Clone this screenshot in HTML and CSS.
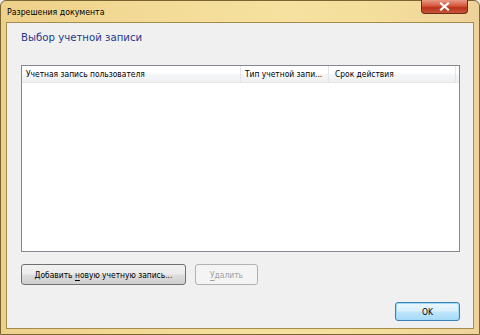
FILE: index.html
```html
<!DOCTYPE html>
<html lang="ru">
<head>
  <meta charset="UTF-8">
  <title>Разрешения документа</title>
  <link rel="stylesheet" href="styles.css">
</head>
<body>
  <div class="window">
    <div class="titlebar">
      <span class="title">Разрешения документа</span>
      <div class="close-btn">
        <svg width="11" height="9" viewBox="0 0 11 9">
          <path d="M2 1.5 L9 7.5 M9 1.5 L2 7.5" stroke="#fff" stroke-width="2.2" stroke-linecap="square"/>
        </svg>
      </div>
    </div>

    <div class="client">
      <h1 class="heading">Выбор учетной записи</h1>

      <div class="listview">
        <div class="list-header">
          <div class="col col-user">Учетная запись пользователя</div>
          <div class="col col-type">Тип учетной запи...</div>
          <div class="col col-term">Срок действия</div>
        </div>
        <div class="list-body"></div>
      </div>

      <div class="actions">
        <button class="btn btn-add">Добавить <u>н</u>овую учетную запись...</button>
        <button class="btn btn-remove" disabled><u>У</u>далить</button>
      </div>

      <div class="footer">
        <button class="btn btn-ok">OK</button>
      </div>
    </div>
  </div>
</body>
</html>
```

FILE: styles.css
```css
* {
  box-sizing: border-box;
}

body {
  margin: 0;
  font-family: "DejaVu Sans Condensed", "DejaVu Sans", sans-serif;
  font-size: 8.4px;
  color: #000;
  background: #f0f0f0;
}

.window {
  width: 480px;
  height: 335px;
  display: flex;
  flex-direction: column;
  background: linear-gradient(90deg, #edd08a 0%, #f3dc98 35%, #f7e1a0 60%, #f4de9c 80%, #eed29b 100%);
  border: 1px solid #7a6532;
  border-radius: 6px 6px 0 0;
  padding: 0 5px 5px 5px;
}

.titlebar {
  height: 21px;
  display: flex;
  align-items: flex-start;
  justify-content: space-between;
}

.title {
  padding: 5px 0 0 1px;
  font-size: 8.7px;
  color: #000;
  line-height: 12px;
}

.close-btn {
  width: 47px;
  height: 14px;
  margin-top: -1px;
  margin-right: 6px;
  border: 1px solid #6e2a1c;
  border-top: none;
  border-radius: 0 0 4px 4px;
  background: linear-gradient(#e99a86 0%, #d4583c 45%, #b8331a 60%, #c8563a 100%);
  display: flex;
  align-items: center;
  justify-content: center;
}

.client {
  flex: 1;
  background: #f0f0f0;
  border: 1px solid #a48c4e;
  padding: 0 13px 0 14px;
  display: flex;
  flex-direction: column;
}

.heading {
  margin: 5px 0 0 0;
  font-weight: normal;
  font-size: 11.3px;
  line-height: 20px;
  color: #1e3a8c;
}

.listview {
  margin-top: 17px;
  height: 187px;
  background: #fff;
  border: 1px solid #828790;
  display: flex;
  flex-direction: column;
}

.list-header {
  height: 17px;
  display: flex;
  background: linear-gradient(#ffffff 0%, #ffffff 45%, #f4f5f7 55%, #f0f1f4 100%);
  border-bottom: 1px solid #e5e5e5;
}

.col {
  padding-left: 4px;
  line-height: 16px;
  border-right: 1px solid #e3e5e8;
  white-space: nowrap;
  overflow: hidden;
}

.col-user {
  width: 219px;
}

.col-type {
  width: 88px;
  padding-left: 4px;
}

.col-term {
  flex: 1;
  padding-left: 6px;
  margin-right: 3px;
}

.list-body {
  flex: 1;
}

.actions {
  margin-top: 12px;
  display: flex;
  gap: 9px;
}

.btn {
  font-family: inherit;
  font-size: 8.4px;
  height: 21px;
  padding: 0;
  white-space: nowrap;
  border: 1px solid #707070;
  border-radius: 3px;
  background: linear-gradient(#f2f2f2 0%, #ebebeb 48%, #dddddd 52%, #cfcfcf 100%);
  color: #000;
}

.btn u {
  text-underline-offset: 2px;
}

.btn-add {
  width: 165px;
}

.btn-remove {
  width: 63px;
  color: #a0a0a0;
  border-color: #adb2b5;
  background: #f4f4f4;
}

.footer {
  margin-top: auto;
  margin-bottom: 7px;
  display: flex;
  justify-content: flex-end;
}

.btn-ok {
  width: 65px;
  height: 19px;
  border: 1px solid #3c7fb1;
  background: linear-gradient(#eaf6fd 0%, #d9f0fc 48%, #bee6fd 52%, #a7d9f5 100%);
  box-shadow: inset 0 0 0 1px #9fdaf9;
}
```
